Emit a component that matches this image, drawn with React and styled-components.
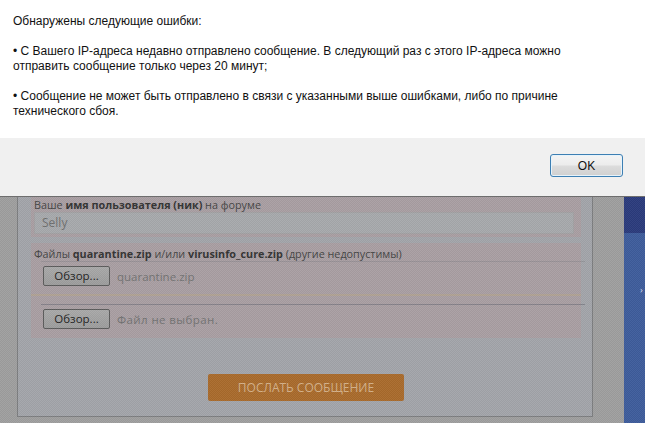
import React from "react";
import styled, { createGlobalStyle } from "styled-components";

const Global = createGlobalStyle`
  html, body { margin: 0; padding: 0; }
  body { width: 645px; height: 423px; overflow: hidden; background: #9e9e9e; }
`;

const Screen = styled.div`
  width: 645px;
  height: 423px;
  display: flex;
  flex-direction: column;
  overflow: hidden;
`;

const Dialog = styled.div`
  display: flex;
  flex-direction: column;
  border-bottom: 1px solid #6e6e6e;
  font-family: "Liberation Sans", Arial, sans-serif;
  font-size: 12px;
  line-height: 15px;
  color: #111;
`;

const Message = styled.div`
  background: #ffffff;
  height: 138px;
  box-sizing: border-box;
  padding: 14px 0 0 13px;
`;

const Para = styled.p`
  margin: 0 0 15px 0;
`;

const Footer = styled.div`
  background: #f0f0f0;
  height: 58px;
  box-sizing: border-box;
  padding: 16px 22px 0 0;
  display: flex;
  justify-content: flex-end;
  align-items: flex-start;
`;

const OkButton = styled.button`
  width: 73px;
  height: 23px;
  box-sizing: border-box;
  border: 1px solid #3d7fb3;
  border-radius: 3px;
  background: linear-gradient(#f4f4f4 0%, #ececec 48%, #dcdcdc 52%, #d0d0d0 100%);
  box-shadow: inset 0 0 0 1px #e6f3fb;
  font-family: "Liberation Sans", Arial, sans-serif;
  font-size: 12px;
  color: #111;
  padding: 0;
`;

const Page = styled.div`
  position: relative;
  flex: 1;
  display: flex;
  background: #9f9f9f;
  font-family: "Open Sans", "Liberation Sans", sans-serif;
  &::after {
    content: "";
    position: absolute;
    inset: 0;
    pointer-events: none;
    background-image: repeating-conic-gradient(rgba(255,255,255,0.045) 0% 25%, rgba(0,0,0,0.035) 0% 50%);
    background-size: 2px 2px;
  }
`;

const Gutter = styled.div`
  width: 17px;
  flex: none;
`;

const Panel = styled.div`
  width: 576px;
  height: 220px;
  box-sizing: border-box;
  flex: none;
  border: 1px solid #7c7d80;
  border-top: none;
  background: #a3a5aa;
  padding: 0 11px 0 13px;
  display: flex;
  flex-direction: column;
`;

const Strip = styled.div`
  width: 31px;
  flex: none;
`;

const Sidebar = styled.div`
  width: 21px;
  flex: none;
  display: flex;
  flex-direction: column;
  background: #3e5c9c;
`;

const SidebarHead = styled.div`
  height: 36px;
  background: #2b3b7c;
`;

const SidebarMark = styled.span`
  margin: 52px 0 0 16px;
  color: #d9dff0;
  font-size: 9px;
  line-height: 10px;
`;

const Block = styled.div`
  background: #a99fa3;
  padding: ${(p) => p.$pad};
  margin-top: ${(p) => p.$top || 0}px;
  display: flex;
  flex-direction: column;
`;

const Label = styled.div`
  font-size: 10.8px;
  line-height: 14px;
  color: #444;
  padding-left: 3px;
  white-space: nowrap;
  b { color: #333; font-weight: 700; }
`;

const Input = styled.div`
  margin: 0 7px 0 3px;
  height: 22px;
  box-sizing: border-box;
  background: #a7a9ac;
  border: 1px solid #a2a1a3;
  padding-left: 7px;
  font-size: 12px;
  line-height: 20px;
  color: #6f6f6f;
`;

const FileRow = styled.div`
  margin: 0 -4px 0 10px;
  border-top: 1px solid ${(p) => p.$line};
  padding: ${(p) => p.$pad};
  display: flex;
  flex-direction: column;
`;

const FileLine = styled.div`
  display: flex;
  align-items: center;
  gap: 7px;
`;

const Browse = styled.button`
  width: 67px;
  height: 20px;
  box-sizing: border-box;
  margin-left: 2px;
  border: 1px solid #5b5b5b;
  border-radius: 2px;
  background: linear-gradient(#a9a9a9, #9d9d9d);
  font-family: "Open Sans", "Liberation Sans", sans-serif;
  font-size: 11.5px;
  color: #222;
  padding: 0;
  line-height: 18px;
`;

const FileName = styled.span`
  font-size: 11.5px;
  color: #727272;
  letter-spacing: ${(p) => (p.$spaced ? "0.4px" : "0")};
`;

const UploadBar = styled.div`
  height: 2px;
  margin: 8px 4px 0 -10px;
  background: rgba(190, 170, 120, 0.35);
`;

const Submit = styled.button`
  align-self: center;
  margin-top: 36px;
  width: 196px;
  height: 27px;
  border: none;
  border-radius: 2px;
  background: #a96b2c;
  color: #d3b089;
  font-family: "Open Sans", "Liberation Sans", sans-serif;
  font-size: 12px;
  text-transform: uppercase;
  padding: 0;
`;

export default function App() {
  return (
    <Screen>
      <Global />
      <Dialog>
        <Message>
          <Para>Обнаружены следующие ошибки:</Para>
          <Para>
            • С Вашего IP-адреса недавно отправлено сообщение. В следующий раз с этого IP-адреса можно
            <br />
            отправить сообщение только через 20 минут;
          </Para>
          <Para>
            • Сообщение не может быть отправлено в связи с указанными выше ошибками, либо по причине
            <br />
            технического сбоя.
          </Para>
        </Message>
        <Footer>
          <OkButton>OK</OkButton>
        </Footer>
      </Dialog>
      <Page>
        <Gutter />
        <Panel>
          <Block $pad="1px 0 3px 0">
            <Label>
              Ваше <b>имя пользователя (ник)</b> на форуме
            </Label>
            <Input>Selly</Input>
          </Block>
          <Block $pad="4px 0 0 0" $top={6}>
            <Label>
              Файлы <b>quarantine.zip</b> и/или <b>virusinfo_cure.zip</b> (другие недопустимы)
            </Label>
            <FileRow $line="rgba(120,120,125,0.35)" $pad="4px 0 8px 0">
              <FileLine>
                <Browse>Обзор...</Browse>
                <FileName>quarantine.zip</FileName>
              </FileLine>
              <UploadBar />
            </FileRow>
            <FileRow $line="rgba(110,110,120,0.6)" $pad="4px 0 9px 0">
              <FileLine>
                <Browse>Обзор...</Browse>
                <FileName $spaced>Файл не выбран.</FileName>
              </FileLine>
            </FileRow>
          </Block>
          <Submit>Послать сообщение</Submit>
        </Panel>
        <Strip />
        <Sidebar>
          <SidebarHead />
          <SidebarMark>›</SidebarMark>
        </Sidebar>
      </Page>
    </Screen>
  );
}
